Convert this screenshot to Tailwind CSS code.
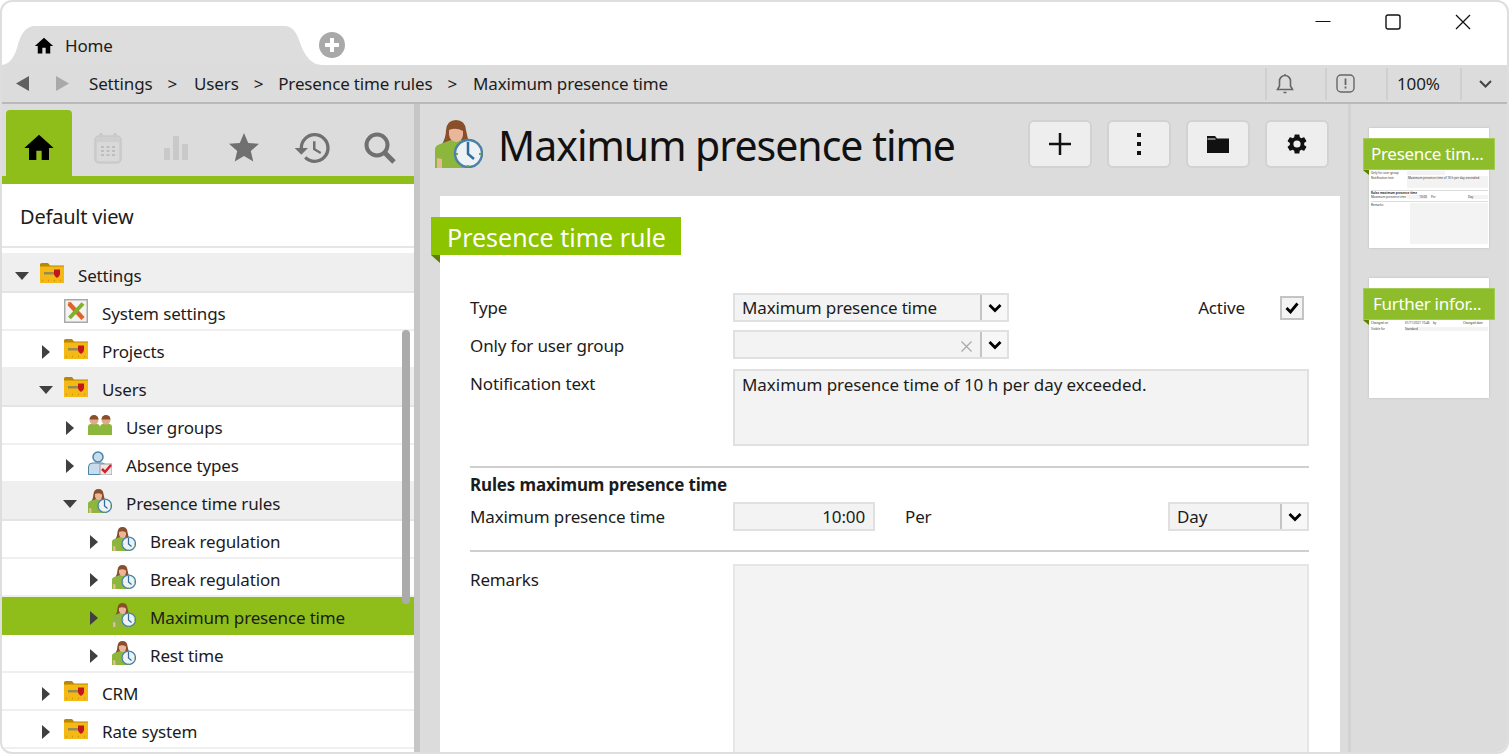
<!DOCTYPE html>
<html lang="en">
<head>
    <meta charset="UTF-8">
    <title>Maximum presence time</title>
    <script src="https://cdn.jsdelivr.net/npm/@tailwindcss/browser@4"></script>
</head>
<body class="bg-white">
    <svg class="hidden">
        <symbol id="folder" viewBox="0 0 24 20">
            <path d="M0 3V1.500Q0 0 1.500 0H8l2 2.500h14V20H0z" fill="#b8860b"/>
            <rect x="0" y="3.500" width="24" height="16.500" fill="#f5b914"/>
            <rect x="4" y="9" width="11" height="2.500" fill="#9a8a50"/>
            <path d="M14 6.500h6v4.500q0 2.500-3 4-3-1.500-3-4z" fill="#c2161c"/>
            <path d="M2 17.500h20" stroke="#c99410" stroke-width="1.500" stroke-dasharray="1 5"/>
        </symbol>
        <symbol id="wrench" viewBox="0 0 24 24">
            <rect x="0.750" y="0.750" width="22.500" height="22.500" fill="#f3f3f3" stroke="#a9a9a9" stroke-width="1.500"/>
            <path d="M5 4.500l14 15" stroke="#e2622b" stroke-width="4.500"/>
            <path d="M19 4.500L5.500 19" stroke="#7fb02e" stroke-width="4"/>
            <path d="M4 3l4 1-3 3z" fill="#e2622b"/>
        </symbol>
        <symbol id="group" viewBox="0 0 24 20">
            <path d="M0 20v-8q0-3 3-3h6q2.500 0 3 3 .5-3 3-3h6q3 0 3 3v8z" fill="#8db63c"/>
            <circle cx="6" cy="5" r="4.500" fill="#e0ab8b"/><path d="M1.500 4.500a4.500 4.500 0 0 1 9 0z" fill="#8a4f2a"/>
            <circle cx="18" cy="5" r="4.500" fill="#e0ab8b"/><path d="M13.500 4.500a4.500 4.500 0 0 1 9 0z" fill="#8a4f2a"/>
        </symbol>
        <symbol id="absence" viewBox="0 0 24 24">
            <circle cx="10" cy="6" r="5" fill="#c9dcec" stroke="#4b83a8" stroke-width="1.500"/>
            <path d="M0.500 23.500V16q0-4 4-4h10q3 0 3 4v7.500z" fill="#c9dcec" stroke="#4b83a8"/>
            <rect x="12" y="13" width="12" height="11" fill="#e9e9e9" stroke="#9a9a9a"/>
            <path d="M14 18l3 3 6-7" fill="none" stroke="#d42027" stroke-width="2.500"/>
        </symbol>
        <symbol id="presence" viewBox="0 0 48 48">
            <path d="M6 26Q11 18 11 10Q12 0 21 0Q30 0 31 10Q32 18 36 26z" fill="#8a4f2a"/>
            <path d="M0 48V29Q0 25 8 23L16 20H26L36 24V48z" fill="#8db63c"/>
            <path d="M14 10Q21 7 28 11V15Q27 22 21 22Q15 21 14 15z" fill="#e8b79b"/>
            <path d="M2 48V38L7 39V48z" fill="#e8b79b"/>
            <circle cx="33.500" cy="33.500" r="13.500" fill="#eef2f4" stroke="#4b83a8" stroke-width="2.500"/>
            <path d="M33 22v12l6 5" fill="none" stroke="#2f6d9c" stroke-width="2.500"/>
            <path d="M21 34h2M44 34h2M33 45v2" stroke="#7da33a" stroke-width="2"/>
        </symbol>
        <symbol id="caret-right" viewBox="0 0 8 14"><path d="M0 0l8 7-8 7z" fill="#404040"/></symbol>
        <symbol id="caret-down" viewBox="0 0 14 8"><path d="M0 0h14L7 8z" fill="#404040"/></symbol>
        <symbol id="chev" viewBox="0 0 14 10"><path d="M1.500 2L7 7.500 12.500 2" fill="none" stroke="#000" stroke-width="2.800"/></symbol>
    </svg>

    <div class="h-[754px] w-[1509px] flex flex-col overflow-hidden border-2 border-[#dedede] rounded-[12px] text-[#1c1c1c] text-[17px] font-['Noto_Sans',sans-serif] tracking-[-0.15px]">
        <!-- title bar -->
        <div class="h-[63px] shrink-0 flex items-end relative">
            <div class="relative w-[313px] h-[39px] flex items-center pl-[32px] gap-[11px]">
                <svg class="absolute inset-0" width="320" height="39" viewBox="0 0 320 39"><path d="M0 39Q10 38 15 22Q20 0 33 0H283Q292 0 297 14Q305 39 320 39z" fill="#dddddd"/></svg>
                <svg class="relative" width="20" height="20" viewBox="0 0 24 24"><path d="M10 21v-7h4v7h5.500v-9H23L12 2 1 12h3.500v9z" fill="#000"/></svg>
                <span class="relative">Home</span>
            </div>
            <svg class="mb-[7px] ml-[4px]" width="26" height="26" viewBox="0 0 26 26"><circle cx="13" cy="13" r="13" fill="#a9a9a9"/><path d="M13 6v14M6 13h14" stroke="#fff" stroke-width="4"/></svg>
            <div class="absolute right-[36px] top-[12px] flex items-center gap-[54px]">
                <svg width="16" height="16" viewBox="0 0 16 16"><path d="M0.500 7.500h15" stroke="#111" stroke-width="1.200"/></svg>
                <svg width="16" height="16" viewBox="0 0 16 16"><rect x="1" y="1" width="14" height="14" rx="2" fill="none" stroke="#111" stroke-width="1.400"/></svg>
                <svg width="16" height="16" viewBox="0 0 16 16"><path d="M1 1l14 14M15 1L1 15" stroke="#111" stroke-width="1.300"/></svg>
            </div>
        </div>

        <!-- breadcrumb bar -->
        <div class="h-[39px] shrink-0 bg-[#dcdcdc] border-b-2 border-[#b9b9b9] flex items-center">
            <svg class="ml-[14px]" width="13" height="15" viewBox="0 0 13 15"><path d="M13 0v15L0 7.500z" fill="#606060"/></svg>
            <svg class="ml-[27px]" width="13" height="15" viewBox="0 0 13 15"><path d="M0 0v15l13-7.500z" fill="#a9a9a9"/></svg>
            <span class="ml-[20px]">Settings</span>
            <span class="ml-[15px]">&gt;</span>
            <span class="ml-[17px]">Users</span>
            <span class="ml-[15px]">&gt;</span>
            <span class="ml-[15px]">Presence time rules</span>
            <span class="ml-[15px]">&gt;</span>
            <span class="ml-[16px]">Maximum presence time</span>
            <div class="ml-auto flex items-center h-[32px] self-center">
                <div class="w-[60px] h-full border-l-2 border-[#cfcfcf] flex items-center pl-[9px]">
                    <svg width="18" height="21" viewBox="0 0 18 21"><path d="M1.500 16.500h15L14.500 13V8a5.500 5.500 0 0 0-11 0v5zM8 2h2M7.500 19.500h3" fill="none" stroke="#666" stroke-width="1.600"/></svg>
                </div>
                <div class="w-[61px] h-full border-l-2 border-[#cfcfcf] flex items-center pl-[9px]">
                    <svg width="19" height="19" viewBox="0 0 19 19"><rect x="1" y="1" width="17" height="17" rx="4" fill="none" stroke="#666" stroke-width="1.400"/><path d="M9.500 4.500v6.500M9.500 12.500v2" stroke="#666" stroke-width="1.800"/></svg>
                </div>
                <div class="w-[74px] h-full border-l-2 border-[#cfcfcf] flex items-center pl-[9px]">100%</div>
                <div class="w-[47px] h-full border-l-2 border-[#cfcfcf] flex items-center justify-center pl-[2px]">
                    <svg width="15" height="10" viewBox="0 0 14 10"><path d="M1.500 2L7 7.500 12.500 2" fill="none" stroke="#444" stroke-width="2"/></svg>
                </div>
            </div>
        </div>

        <!-- main -->
        <div class="flex-1 flex min-h-0 bg-[#dcdcdc]">
            <!-- sidebar -->
            <div class="w-[412px] shrink-0 flex flex-col relative">
                <div class="h-[72px] shrink-0 flex items-end pl-[4px]">
                    <div class="w-[66px] h-[66px] bg-[#8fbe1a] rounded-t-[4px] flex items-center justify-center pt-[10px]">
                        <svg width="32" height="32" viewBox="0 0 24 24"><path d="M10 21v-7h4v7h5.500v-9H23L12 2 1 12h3.500v9z" fill="#000"/></svg>
                    </div>
                    <div class="w-[72px] h-[66px] flex items-center justify-center pt-[10px]">
                        <svg width="28" height="31" viewBox="0 0 28 31"><path d="M7 0v4M21 0v4" stroke="#c9c9c9" stroke-width="3"/><rect x="1" y="3" width="26" height="27" rx="4" fill="#cfcfcf" stroke="#c9c9c9" stroke-width="1.500"/><rect x="3" y="9" width="22" height="19" rx="2" fill="#d9d9d9"/><path d="M7 14h3M12.500 14h3M18 14h3M7 18h3M12.500 18h3M18 18h3M7 22h3M12.500 22h3M18 22h3" stroke="#bdbdbd" stroke-width="2"/></svg>
                    </div>
                    <div class="w-[64px] h-[66px] flex items-center justify-center pt-[10px]">
                        <svg width="26" height="26" viewBox="0 0 26 26"><rect x="1" y="13" width="6" height="12" fill="#c9c9c9"/><rect x="10" y="1" width="6" height="24" fill="#c9c9c9"/><rect x="19" y="9" width="6" height="16" fill="#c9c9c9"/></svg>
                    </div>
                    <div class="w-[72px] h-[66px] flex items-center justify-center pt-[10px]">
                        <svg width="36" height="36" viewBox="0 0 24 24"><path d="M12 17.270L18.180 21l-1.640-7.030L22 9.240l-7.190-.61L12 2 9.190 8.630 2 9.240l5.460 4.730L5.820 21z" fill="#707070"/></svg>
                    </div>
                    <div class="w-[66px] h-[66px] flex items-center justify-center pt-[10px]">
                        <svg width="40" height="40" viewBox="0 0 24 24"><path d="M13 3a9 9 0 0 0-9 9H1l3.890 3.890.07.14L9 12H6c0-3.870 3.130-7 7-7s7 3.130 7 7-3.130 7-7 7c-1.930 0-3.680-.79-4.940-2.060l-1.420 1.420A8.954 8.954 0 0 0 13 21a9 9 0 0 0 0-18zm-1 5v5l4.280 2.540.72-1.210-3.500-2.080V8H12z" fill="#707070"/></svg>
                    </div>
                    <div class="w-[68px] h-[66px] flex items-center justify-center pt-[10px]">
                        <svg width="32" height="32" viewBox="0 0 32 32"><circle cx="13" cy="13" r="10.500" fill="none" stroke="#707070" stroke-width="4"/><path d="M21 21l9 9" stroke="#707070" stroke-width="5"/></svg>
                    </div>
                </div>
                <div class="h-[8px] shrink-0 bg-[#8fbe1a]"></div>
                <div class="bg-white flex-1 min-h-0 overflow-hidden flex flex-col">
                    <div class="h-[64px] shrink-0 flex items-center pl-[18px] pt-[4px] text-[20px] tracking-[-0.2px] border-b-2 border-[#e6e6e6]">Default view</div>
                    <div class="pt-[5px]">
                        <div class="h-[40px] pt-[2px] flex items-center bg-[#efefef] border-b-2 border-[#e4e4e4]">
                            <svg class="ml-[13px] mt-[6px]" width="14" height="8"><use href="#caret-down"/></svg>
                            <svg class="ml-[11px]" width="24" height="20"><use href="#folder"/></svg>
                            <span class="ml-[14px] pt-[6px]">Settings</span>
                        </div>
                        <div class="h-[38px] flex items-center border-b-2 border-[#efefef]">
                            <svg class="ml-[62px]" width="24" height="24"><use href="#wrench"/></svg>
                            <span class="ml-[14px] pt-[6px]">System settings</span>
                        </div>
                        <div class="h-[38px] flex items-center border-b-2 border-[#efefef]">
                            <svg class="ml-[40px] mt-[6px]" width="8" height="14"><use href="#caret-right"/></svg>
                            <svg class="ml-[14px]" width="24" height="20"><use href="#folder"/></svg>
                            <span class="ml-[14px] pt-[6px]">Projects</span>
                        </div>
                        <div class="h-[38px] flex items-center bg-[#efefef] border-b-2 border-[#e4e4e4]">
                            <svg class="ml-[37px] mt-[6px]" width="14" height="8"><use href="#caret-down"/></svg>
                            <svg class="ml-[11px]" width="24" height="20"><use href="#folder"/></svg>
                            <span class="ml-[14px] pt-[6px]">Users</span>
                        </div>
                        <div class="h-[38px] flex items-center border-b-2 border-[#efefef]">
                            <svg class="ml-[64px] mt-[6px]" width="8" height="14"><use href="#caret-right"/></svg>
                            <svg class="ml-[14px]" width="24" height="20"><use href="#group"/></svg>
                            <span class="ml-[14px] pt-[6px]">User groups</span>
                        </div>
                        <div class="h-[38px] flex items-center border-b-2 border-[#efefef]">
                            <svg class="ml-[64px] mt-[6px]" width="8" height="14"><use href="#caret-right"/></svg>
                            <svg class="ml-[14px]" width="24" height="24"><use href="#absence"/></svg>
                            <span class="ml-[14px] pt-[6px]">Absence types</span>
                        </div>
                        <div class="h-[38px] flex items-center bg-[#efefef] border-b-2 border-[#e4e4e4]">
                            <svg class="ml-[61px] mt-[6px]" width="14" height="8"><use href="#caret-down"/></svg>
                            <svg class="ml-[11px]" width="24" height="24"><use href="#presence"/></svg>
                            <span class="ml-[14px] pt-[6px]">Presence time rules</span>
                        </div>
                        <div class="h-[38px] flex items-center border-b-2 border-[#efefef]">
                            <svg class="ml-[88px] mt-[6px]" width="8" height="14"><use href="#caret-right"/></svg>
                            <svg class="ml-[14px]" width="24" height="24"><use href="#presence"/></svg>
                            <span class="ml-[14px] pt-[6px]">Break regulation</span>
                        </div>
                        <div class="h-[38px] flex items-center border-b-2 border-[#efefef]">
                            <svg class="ml-[88px] mt-[6px]" width="8" height="14"><use href="#caret-right"/></svg>
                            <svg class="ml-[14px]" width="24" height="24"><use href="#presence"/></svg>
                            <span class="ml-[14px] pt-[6px]">Break regulation</span>
                        </div>
                        <div class="h-[38px] flex items-center bg-[#8fbe1a] pb-[2px]">
                            <svg class="ml-[88px] mt-[6px]" width="8" height="14"><use href="#caret-right"/></svg>
                            <svg class="ml-[14px]" width="24" height="24"><use href="#presence"/></svg>
                            <span class="ml-[14px] pt-[6px]">Maximum presence time</span>
                        </div>
                        <div class="h-[38px] flex items-center border-b-2 border-[#efefef]">
                            <svg class="ml-[88px] mt-[6px]" width="8" height="14"><use href="#caret-right"/></svg>
                            <svg class="ml-[14px]" width="24" height="24"><use href="#presence"/></svg>
                            <span class="ml-[14px] pt-[6px]">Rest time</span>
                        </div>
                        <div class="h-[38px] flex items-center border-b-2 border-[#efefef]">
                            <svg class="ml-[40px] mt-[6px]" width="8" height="14"><use href="#caret-right"/></svg>
                            <svg class="ml-[14px]" width="24" height="20"><use href="#folder"/></svg>
                            <span class="ml-[14px] pt-[6px]">CRM</span>
                        </div>
                        <div class="h-[38px] flex items-center border-b-2 border-[#efefef]">
                            <svg class="ml-[40px] mt-[6px]" width="8" height="14"><use href="#caret-right"/></svg>
                            <svg class="ml-[14px]" width="24" height="20"><use href="#folder"/></svg>
                            <span class="ml-[14px] pt-[6px]">Rate system</span>
                        </div>
                    </div>
                </div>
                <!-- scrollbar thumb -->
                <div class="absolute left-[400px] top-[226px] w-[8px] h-[274px] rounded-full bg-[#ababab]"></div>
            </div>
            <div class="w-[6px] shrink-0 bg-[#c6c6c6]"></div>

            <!-- center -->
            <div class="flex-1 min-w-0 flex flex-col">
                <div class="h-[92px] shrink-0 flex items-center pl-[15px] pr-[19px] pb-[12px]">
                    <svg width="48" height="48"><use href="#presence"/></svg>
                    <h1 class="ml-[15px] pt-[3px] text-[41px] text-[#111] tracking-[-1px]">Maximum presence time</h1>
                    <div class="ml-auto flex gap-[15px]">
                        <div class="w-[64px] h-[48px] flex items-center justify-center bg-[#eeeeee] border-2 border-[#d2d2d2] rounded-[6px]">
                            <svg width="22" height="22" viewBox="0 0 22 22"><path d="M11 0v22M0 11h22" stroke="#111" stroke-width="2.500"/></svg>
                        </div>
                        <div class="w-[64px] h-[48px] flex items-center justify-center bg-[#eeeeee] border-2 border-[#d2d2d2] rounded-[6px]">
                            <svg width="4" height="22" viewBox="0 0 4 22"><path d="M0 0h4v4H0zM0 9h4v4H0zM0 18h4v4H0z" fill="#111"/></svg>
                        </div>
                        <div class="w-[64px] h-[48px] flex items-center justify-center bg-[#eeeeee] border-2 border-[#d2d2d2] rounded-[6px]">
                            <svg width="22" height="17" viewBox="0 0 22 17"><path d="M0 0h8l2 2.500h12V17H0z" fill="#111"/><path d="M0.500 3h8" stroke="#eee"/></svg>
                        </div>
                        <div class="w-[64px] h-[48px] flex items-center justify-center bg-[#eeeeee] border-2 border-[#d2d2d2] rounded-[6px]">
                            <svg width="24" height="24" viewBox="0 0 24 24"><path d="M19.140 12.940c.04-.3.060-.61.060-.94s-.020-.64-.070-.94l2.030-1.580a.49.49 0 0 0 .12-.61l-1.920-3.320a.49.49 0 0 0-.59-.22l-2.390.96a7.030 7.030 0 0 0-1.620-.94l-.360-2.540a.48.48 0 0 0-.480-.410h-3.840a.48.48 0 0 0-.470.410l-.360 2.540c-.590.240-1.130.570-1.620.94l-2.390-.96a.49.49 0 0 0-.59.220L2.740 8.870a.48.48 0 0 0 .12.610l2.030 1.580c-.050.3-.090.63-.090.940s.020.640.070.940l-2.030 1.580a.49.49 0 0 0-.12.610l1.920 3.320c.12.220.37.290.59.220l2.390-.96c.5.380 1.030.7 1.620.94l.360 2.540c.050.240.240.410.480.410h3.840c.24 0 .44-.170.470-.410l.360-2.540c.590-.240 1.130-.560 1.620-.94l2.390.96c.22.080.47 0 .59-.22l1.920-3.320a.48.48 0 0 0-.12-.61zM12 15.600a3.600 3.600 0 1 1 0-7.200 3.600 3.600 0 0 1 0 7.200z" fill="#111"/></svg>
                        </div>
                    </div>
                </div>

                <!-- card -->
                <div class="flex-1 min-h-0 ml-[20px] mr-[8px] bg-white relative overflow-visible">
                    <div class="absolute -left-[9px] top-[21px] h-[38px] w-[250px] bg-[#8cc400] text-white text-[25px] leading-[40px] pl-[16px] tracking-normal">Presence time rule</div>
                    <svg class="absolute -left-[9px] top-[59px]" width="9" height="8" viewBox="0 0 9 8"><path d="M0 0h9v8z" fill="#5c8000"/></svg>

                    <div class="pt-[97px] pl-[30px] pr-[31px]">
                        <div class="flex items-center h-[29px]">
                            <span class="w-[263px] pt-[1px]">Type</span>
                            <div class="w-[276px] h-[29px] bg-[#f3f3f3] border-2 border-[#e0e0e0] flex items-center pl-[7px]">
                                <span class="flex-1 pt-[1px]">Maximum presence time</span>
                                <div class="w-[27px] h-full bg-[#f7f7f7] border-l-2 border-[#c4c4c4] flex items-center justify-center"><svg width="14" height="10"><use href="#chev"/></svg></div>
                            </div>
                            <span class="ml-auto mr-[35px] pt-[1px]">Active</span>
                            <div class="w-[24px] h-[24px] mr-[5px] bg-[#f3f3f3] border-2 border-[#c4c4c4] flex items-center justify-center">
                                <svg width="14" height="12" viewBox="0 0 14 12"><path d="M1.500 6l4 4 7-8.500" fill="none" stroke="#000" stroke-width="2.800"/></svg>
                            </div>
                        </div>
                        <div class="flex items-center h-[29px] mt-[8px]">
                            <span class="w-[263px] pt-[3px]">Only for user group</span>
                            <div class="w-[276px] h-[29px] bg-[#f3f3f3] border-2 border-[#e0e0e0] flex items-center justify-end">
                                <svg class="mr-[8px] mt-[3px]" width="11" height="11" viewBox="0 0 11 11"><path d="M0.500 0.500l10 10M10.500 0.500l-10 10" stroke="#a8a8a8" stroke-width="1.200"/></svg>
                                <div class="w-[27px] h-full bg-[#f7f7f7] border-l-2 border-[#c4c4c4] flex items-center justify-center"><svg width="14" height="10"><use href="#chev"/></svg></div>
                            </div>
                        </div>
                        <div class="flex mt-[10px]">
                            <span class="w-[263px] pt-[2px]">Notification text</span>
                            <div class="flex-1 h-[77px] bg-[#f3f3f3] border-2 border-[#e0e0e0] pl-[7px] pt-[1px] tracking-[-0.05px]">Maximum presence time of 10 h per day exceeded.</div>
                        </div>
                        <div class="h-[2px] bg-[#cfcfcf] mt-[20px]"></div>
                        <div class="font-bold mt-[3px] h-[30px] leading-[28px]">Rules maximum presence time</div>
                        <div class="flex items-center h-[29px] mt-[1px]">
                            <span class="w-[263px] pt-[1px]">Maximum presence time</span>
                            <div class="w-[142px] h-[29px] bg-[#f3f3f3] border-2 border-[#e0e0e0] flex items-center justify-end pr-[8px] pt-[1px]">10:00</div>
                            <span class="ml-[30px] pt-[1px]">Per</span>
                            <div class="ml-auto w-[141px] h-[29px] bg-[#f3f3f3] border-2 border-[#e0e0e0] flex items-center pl-[7px]">
                                <span class="flex-1 pt-[1px]">Day</span>
                                <div class="w-[27px] h-full bg-[#f7f7f7] border-l-2 border-[#c4c4c4] flex items-center justify-center"><svg width="14" height="10"><use href="#chev"/></svg></div>
                            </div>
                        </div>
                        <div class="h-[2px] bg-[#cfcfcf] mt-[19px]"></div>
                        <div class="flex mt-[12px]">
                            <span class="w-[263px] pt-[3px]">Remarks</span>
                            <div class="flex-1 h-[220px] bg-[#f3f3f3] border-2 border-[#e6e6e6]"></div>
                        </div>
                    </div>
                </div>
            </div>

            <!-- right thumbnails -->
            <div class="w-[159px] shrink-0 border-l-[3px] border-[#d2d2d2] flex flex-col items-center pt-[24px] gap-[30px]">
                <div class="w-[120px] h-[120px] bg-white relative shadow-[0_0_2px_#bbb] pl-[2px] pr-[1px] text-[3px] leading-[4px] tracking-normal text-[#333]">
                    <div class="absolute -left-[6px] top-[10px] w-[132px] h-[32px] bg-[#8dbd2a] border border-[#a4cc55] text-white text-[17px] leading-[30px] pl-[7px] tracking-[-0.3px]">Presence tim...</div>
                    <svg class="absolute -left-[6px] top-[42px]" width="6" height="5" viewBox="0 0 6 5"><path d="M0 0h6v5z" fill="#5c8000"/></svg>
                    <div class="pt-[43px] flex"><span class="w-[36px]">Only for user group</span><div class="w-[38px] h-[4px] bg-[#f3f3f3]"></div></div>
                    <div class="mt-[1px] flex"><span class="w-[36px]">Notification text</span><div class="flex-1 h-[12px] bg-[#f3f3f3] pl-[1px]">Maximum presence time of 10 h per day exceeded.</div></div>
                    <div class="h-px bg-[#dddddd] mt-[2px]"></div>
                    <div class="font-bold">Rules maximum presence time</div>
                    <div class="flex"><span class="w-[36px]">Maximum presence time</span><div class="w-[20px] h-[4px] bg-[#f3f3f3] text-right">10:00</div><span class="ml-[4px]">Per</span><div class="ml-auto w-[20px] h-[4px] bg-[#f3f3f3]">Day</div></div>
                    <div class="h-px bg-[#dddddd] mt-[2px]"></div>
                    <div class="mt-[1px] flex"><span class="w-[39px]">Remarks</span><div class="flex-1 h-[41px] bg-[#f3f3f3]"></div></div>
                </div>
                <div class="w-[120px] h-[120px] bg-white relative shadow-[0_0_2px_#bbb] pl-[2px] pr-[1px] text-[3px] leading-[4px] tracking-normal text-[#333]">
                    <div class="absolute -left-[6px] top-[10px] w-[132px] h-[32px] bg-[#8dbd2a] border border-[#a4cc55] text-white text-[17px] leading-[30px] pl-[9px] tracking-[-0.3px]">Further infor...</div>
                    <svg class="absolute -left-[6px] top-[42px]" width="6" height="5" viewBox="0 0 6 5"><path d="M0 0h6v5z" fill="#5c8000"/></svg>
                    <div class="pt-[43px] flex"><span class="w-[34px]">Changed on</span><span class="w-[28px]">01/11/2021 10:46</span><span class="w-[30px]">by</span><span>Changed date</span></div>
                    <div class="mt-[2px] flex"><span class="w-[34px]">Visible for</span><div class="flex-1 h-[4px] bg-[#f3f3f3]">Standard</div></div>
                </div>
            </div>
        </div>
    </div>
</body>
</html>
